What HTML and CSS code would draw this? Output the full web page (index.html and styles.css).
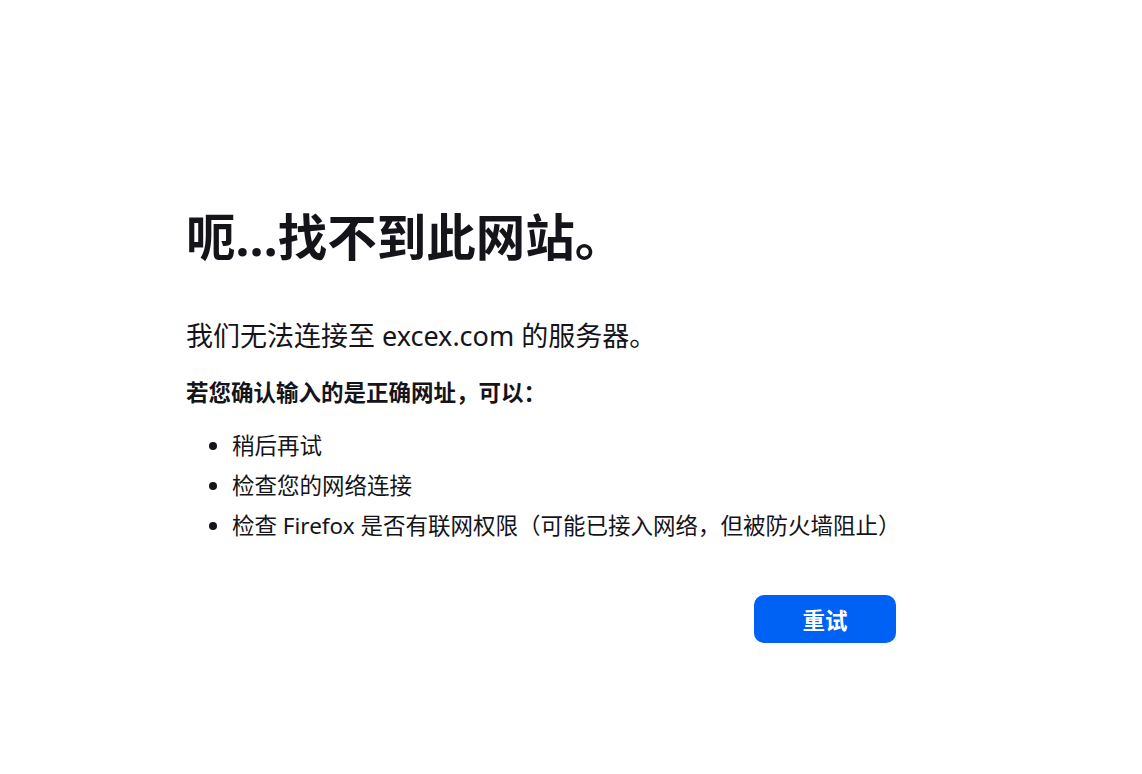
FILE: index.html
```html
<!DOCTYPE html>
<html lang="zh-CN">
<head>
    <meta charset="UTF-8">
    <title>找不到服务器</title>
    <link rel="stylesheet" href="styles.css">
</head>
<body>
    <div class="container">
        <h1 class="title">呃…找不到此网站。</h1>
        <p class="short-desc">我们无法连接至 excex.com 的服务器。</p>
        <p class="hint">若您确认输入的是正确网址，可以：</p>
        <ul class="tips">
            <li>稍后再试</li>
            <li>检查您的网络连接</li>
            <li>检查 Firefox 是否有联网权限（可能已接入网络，但被防火墙阻止）</li>
        </ul>
        <div class="actions">
            <button class="retry-btn">重试</button>
        </div>
    </div>
</body>
</html>
```

FILE: styles.css
```css
body {
    margin: 0;
    background: #fff;
    color: #15141a;
    font-family: "Noto Sans", "Noto Sans CJK SC", sans-serif;
    font-size: 22.5px;
}
.container {
    width: 710px;
    padding: 207px 0 0 186px;
}
.title {
    margin: 0;
    font-size: 49.5px;
    line-height: 60px;
    font-weight: 700;
}
.short-desc {
    margin: 51px 0 0;
    font-size: 27px;
    line-height: 36px;
}
.hint {
    margin: 23px 0 0;
    font-weight: 700;
    line-height: 32px;
}
.tips {
    margin: 21px 0 0;
    padding-left: 46px;
}
.tips li {
    line-height: 32px;
    margin-bottom: 8px;
}
.tips li:last-child {
    margin-bottom: 0;
}
.actions {
    display: flex;
    justify-content: flex-end;
    margin-top: 53px;
}
.retry-btn {
    width: 142px;
    height: 48px;
    border: none;
    border-radius: 10px;
    background: #0062f5;
    color: #fff;
    font-family: inherit;
    font-size: 22.5px;
    font-weight: 700;
    cursor: pointer;
}
```
